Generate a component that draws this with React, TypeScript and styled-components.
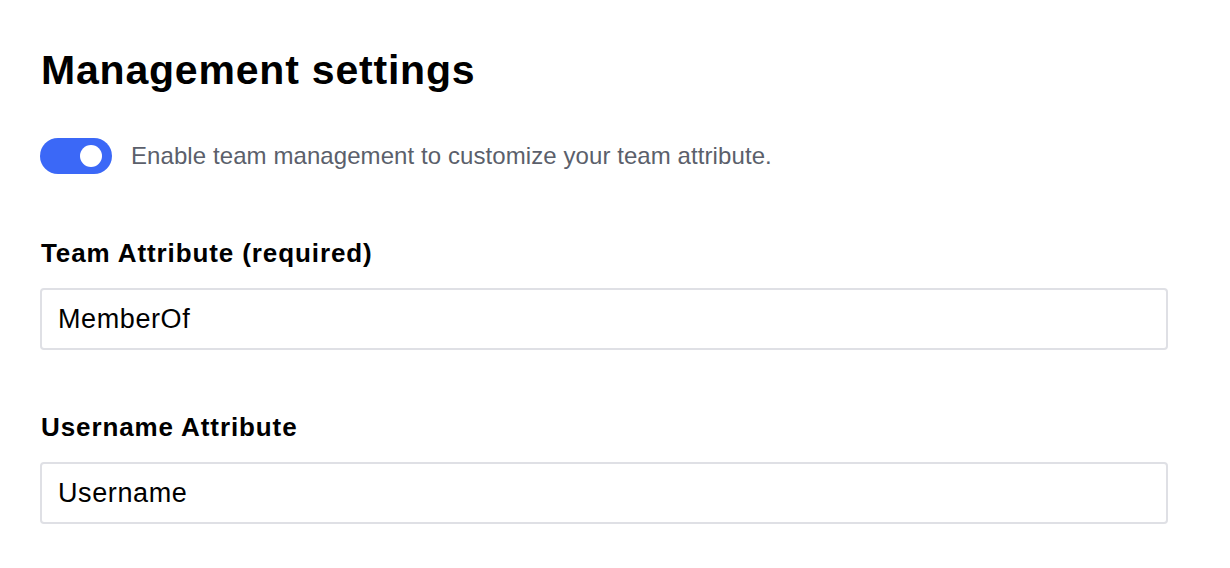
import React from "react";
import styled, { createGlobalStyle } from "styled-components";

const Global = createGlobalStyle`
  html, body { margin: 0; padding: 0; background: #ffffff; }
  body { font-family: "Liberation Sans", Arial, Helvetica, sans-serif; color: #000; }
`;

const Page = styled.div`
  padding: 44px 62px 0 40px;
  display: flex;
  flex-direction: column;
`;

const Title = styled.h1`
  margin: 0 0 0 1px;
  font-size: 41px;
  font-weight: 700;
  line-height: 52px;
  letter-spacing: 0.8px;
`;

const ToggleRow = styled.div`
  display: flex;
  align-items: center;
  gap: 19px;
  margin-top: 42px;
`;

const Switch = styled.button<{ $on: boolean }>`
  position: relative;
  width: 72px;
  height: 36px;
  border-radius: 18px;
  border: none;
  padding: 0;
  background: ${(p) => (p.$on ? "#3b68f7" : "#c9ccd4")};
  cursor: pointer;
  flex-shrink: 0;
  &::after {
    content: "";
    position: absolute;
    top: 7px;
    left: ${(p) => (p.$on ? "40px" : "10px")};
    width: 22px;
    height: 22px;
    border-radius: 50%;
    background: #fff;
  }
`;

const ToggleText = styled.span`
  font-size: 24px;
  letter-spacing: 0.08px;
  color: #5b5f6b;
`;

const Field = styled.div<{ $top: number }>`
  display: flex;
  flex-direction: column;
  margin-top: ${(p) => p.$top}px;
`;

const Label = styled.label`
  font-size: 26px;
  font-weight: 700;
  letter-spacing: 0.9px;
  margin-left: 1px;
  line-height: 30px;
`;

const Input = styled.input`
  margin-top: 20px;
  box-sizing: border-box;
  width: 1128px;
  height: 62px;
  border: 2px solid #dfe0e5;
  border-radius: 4px;
  padding: 0 16px;
  font-family: "Liberation Sans", Arial, Helvetica, sans-serif;
  font-size: 27px;
  letter-spacing: 0.6px;
  color: #000;
  outline: none;
  background: #fff;
`;

export default function App() {
  return (
    <>
      <Global />
      <Page>
        <Title>Management settings</Title>
        <ToggleRow>
          <Switch $on={true} aria-label="Enable team management" />
          <ToggleText>Enable team management to customize your team attribute.</ToggleText>
        </ToggleRow>
        <Field $top={64}>
          <Label>Team Attribute (required)</Label>
          <Input defaultValue="MemberOf" />
        </Field>
        <Field $top={62}>
          <Label>Username Attribute</Label>
          <Input defaultValue="Username" />
        </Field>
      </Page>
    </>
  );
}
